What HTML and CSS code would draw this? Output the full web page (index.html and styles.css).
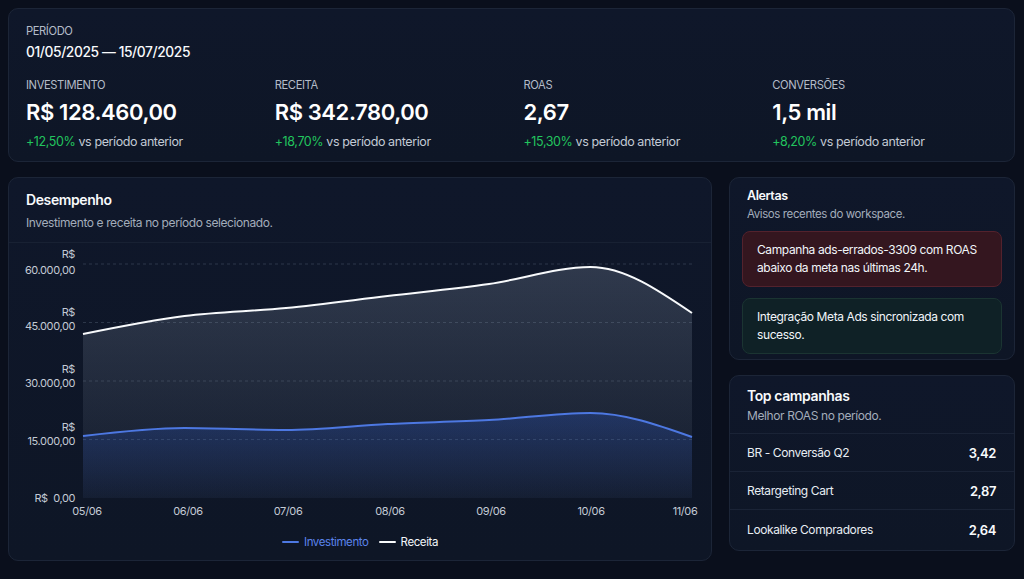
FILE: index.html
```html
<!DOCTYPE html>
<html lang="pt-BR">
<head>
<meta charset="utf-8">
<title>Dashboard</title>
<link rel="stylesheet" href="styles.css">
</head>
<body>
<div class="page">
  <section class="card summary">
    <div class="label">PERÍODO</div>
    <div class="period">01/05/2025 — 15/07/2025</div>
    <div class="metrics">
      <div class="metric">
        <div class="label">INVESTIMENTO</div>
        <div class="value">R$ 128.460,00</div>
        <div class="delta"><span class="up">+12,50%</span> vs período anterior</div>
      </div>
      <div class="metric">
        <div class="label">RECEITA</div>
        <div class="value">R$ 342.780,00</div>
        <div class="delta"><span class="up">+18,70%</span> vs período anterior</div>
      </div>
      <div class="metric">
        <div class="label">ROAS</div>
        <div class="value">2,67</div>
        <div class="delta"><span class="up">+15,30%</span> vs período anterior</div>
      </div>
      <div class="metric">
        <div class="label">CONVERSÕES</div>
        <div class="value">1,5 mil</div>
        <div class="delta"><span class="up">+8,20%</span> vs período anterior</div>
      </div>
    </div>
  </section>

  <div class="row">
    <section class="card perf">
      <header class="perf-head">
        <h2 class="title">Desempenho</h2>
        <p class="sub">Investimento e receita no período selecionado.</p>
      </header>
      <svg class="chart" viewBox="9 243 702 282" width="702" height="282">
        <defs>
          <linearGradient id="gRev" x1="0" y1="0" x2="0" y2="1">
            <stop offset="0" stop-color="#8391a6" stop-opacity="0.28"/>
            <stop offset="1" stop-color="#8391a6" stop-opacity="0.05"/>
          </linearGradient>
          <linearGradient id="gInv" x1="0" y1="0" x2="0" y2="1">
            <stop offset="0" stop-color="#2a56c4" stop-opacity="0.3"/>
            <stop offset="1" stop-color="#2a56c4" stop-opacity="0.04"/>
          </linearGradient>
        </defs>
        <g class="grid">
          <line x1="83" y1="264" x2="692" y2="264"/>
          <line x1="83" y1="322.5" x2="692" y2="322.5"/>
          <line x1="83" y1="381" x2="692" y2="381"/>
          <line x1="83" y1="439.5" x2="692" y2="439.5"/>
        </g>
        <path fill="url(#gRev)" d="M83,334 C116.83,327.16 150.67,320.33 184.5,316 C218.33,311.67 252.17,311.33 286,308 C319.83,304.67 353.67,300 387.5,296 C421.33,292 455.17,288.83 489,284 C522.83,279.17 556.67,267 590.5,267 C624.33,267 658.17,290 692,313 L692,498 L83,498 Z"/>
        <path fill="url(#gInv)" d="M83,436 C116.83,432 150.67,428 184.5,428 C218.33,428 252.17,430 286,430 C319.83,430 353.67,425.67 387.5,424 C421.33,422.33 455.17,421.83 489,420 C522.83,418.17 556.67,413 590.5,413 C624.33,413 658.17,425 692,437 L692,498 L83,498 Z"/>
        <path class="line-rev" d="M83,334 C116.83,327.16 150.67,320.33 184.5,316 C218.33,311.67 252.17,311.33 286,308 C319.83,304.67 353.67,300 387.5,296 C421.33,292 455.17,288.83 489,284 C522.83,279.17 556.67,267 590.5,267 C624.33,267 658.17,290 692,313"/>
        <path class="line-inv" d="M83,436 C116.83,432 150.67,428 184.5,428 C218.33,428 252.17,430 286,430 C319.83,430 353.67,425.67 387.5,424 C421.33,422.33 455.17,421.83 489,420 C522.83,418.17 556.67,413 590.5,413 C624.33,413 658.17,425 692,437"/>
        <g class="ytick">
          <text x="75" y="258">R$</text><text x="75" y="274">60.000,00</text>
          <text x="75" y="316">R$</text><text x="75" y="330">45.000,00</text>
          <text x="75" y="373">R$</text><text x="75" y="387">30.000,00</text>
          <text x="75" y="431">R$</text><text x="75" y="445">15.000,00</text>
          <text x="75" y="502">R$  0,00</text>
        </g>
        <g class="xtick">
          <text x="87" y="515">05/06</text>
          <text x="188" y="515">06/06</text>
          <text x="288" y="515">07/06</text>
          <text x="390" y="515">08/06</text>
          <text x="491" y="515">09/06</text>
          <text x="591" y="515">10/06</text>
          <text x="685" y="515">11/06</text>
        </g>
      </svg>
      <div class="legend">
        <span class="leg leg-inv"><i class="swatch"></i>Investimento</span>
        <span class="leg leg-rev"><i class="swatch"></i>Receita</span>
      </div>
    </section>

    <div class="side">
      <section class="card alerts">
        <div class="alerts-head">
          <h3 class="a-title">Alertas</h3>
          <p class="a-sub">Avisos recentes do workspace.</p>
        </div>
        <div class="alert-list">
          <div class="alert alert-bad">Campanha ads-errados-3309 com ROAS abaixo da meta nas últimas 24h.</div>
          <div class="alert alert-ok">Integração Meta Ads sincronizada com sucesso.</div>
        </div>
      </section>

      <section class="card topc">
        <div class="topc-head">
          <h3 class="title">Top campanhas</h3>
          <p class="sub">Melhor ROAS no período.</p>
        </div>
        <div class="trow"><span>BR - Conversão Q2</span><b>3,42</b></div>
        <div class="trow"><span>Retargeting Cart</span><b>2,87</b></div>
        <div class="trow"><span>Lookalike Compradores</span><b>2,64</b></div>
      </section>
    </div>
  </div>
</div>
</body>
</html>
```

FILE: styles.css
```css
* { box-sizing: border-box; }
html, body { margin: 0; padding: 0; }
body {
  background: #0a0f1c;
  font-family: Inter, "Noto Sans", "Liberation Sans", sans-serif;
  letter-spacing: -0.025em;
  color: #f1f5f9;
  width: 1024px;
  height: 579px;
  overflow: hidden;
}
.page { padding: 8px 9px 8px 8px; }

.card {
  background: linear-gradient(180deg, #0f172a 0%, #0e1626 100%);
  border: 1px solid #1c2537;
  border-radius: 10px;
}

/* summary */
.summary { height: 154px; padding: 14px 17px 0 17px; }
.label { font-size: 11.2px; line-height: 16px; color: #b4bcc8; }
.period { margin-top: 3px; font-size: 13.8px; line-height: 20px; color: #f8fafc; font-weight: 500; }
.metrics {
  margin-top: 15px;
  display: grid;
  grid-template-columns: repeat(4, 1fr);
  column-gap: 24px;
}
.value { margin-top: 5px; font-size: 22px; line-height: 28px; font-weight: 600; color: #ffffff; }
.delta { margin-top: 8px; font-size: 12.5px; line-height: 16px; color: #c3cad5; }
.up { color: #22c55e; }

/* row */
.row {
  margin-top: 15px;
  display: grid;
  grid-template-columns: 1fr 286px;
  column-gap: 17px;
  align-items: start;
}

.title { margin: 0; font-size: 14px; line-height: 20px; font-weight: 600; color: #f8fafc; }
.sub { margin: 0; font-size: 12px; line-height: 16px; color: #a3adbb; }

/* performance */
.perf { height: 384px; }
.perf-head { padding: 12px 17px 11px; border-bottom: 1px solid #182133; }
.perf-head .sub { margin-top: 5px; }
.chart { display: block; }
.grid line { stroke: #3a4558; stroke-dasharray: 3 3; stroke-width: 1; opacity: 0.7; }
.line-rev { fill: none; stroke: #f8fafc; stroke-width: 2; }
.line-inv { fill: none; stroke: #4d78e2; stroke-width: 2; }
.ytick text { font-size: 11px; fill: #c3cad5; text-anchor: end; white-space: pre; }
.xtick text { font-size: 11px; fill: #c3cad5; text-anchor: middle; }
.legend {
  margin-top: 9px;
  display: flex;
  justify-content: center;
  gap: 10px;
  font-size: 11.5px;
  line-height: 16px;
}
.leg { display: inline-flex; align-items: center; gap: 5px; }
.swatch { display: inline-block; width: 17px; height: 2px; border-radius: 1px; }
.leg-inv { color: #5b84ec; }
.leg-inv .swatch { background: #4d78e2; }
.leg-rev { color: #f1f5f9; }
.leg-rev .swatch { background: #f8fafc; }

/* side */
.side { display: flex; flex-direction: column; gap: 15px; }
.alerts { height: 183px; overflow: hidden; }
.alerts-head { padding: 10px 17px 0; }
.a-title { margin: 0; font-size: 12.5px; line-height: 16px; font-weight: 600; color: #f8fafc; }
.a-sub { margin: 3px 0 0; font-size: 11.5px; line-height: 15px; color: #a3adbb; }
.alert-list { padding: 9px 12px 0; display: flex; flex-direction: column; gap: 11px; }
.alert {
  border-radius: 8px;
  padding: 9px 14px;
  font-size: 12px;
  line-height: 18px;
  color: #f1f5f9;
  min-height: 56px;
}
.alert-bad { background: #34161f; border: 1px solid #53222d; }
.alert-ok { background: #0f2126; border: 1px solid #1b3432; }

.topc { height: 176px; overflow: hidden; }
.topc-head { padding: 10px 17px 9px; border-bottom: 1px solid #1a2336; }
.topc-head .sub { margin-top: 2px; }
.trow {
  display: flex;
  justify-content: space-between;
  align-items: center;
  padding: 11px 18px 10px 17px;
  font-size: 12px;
  line-height: 16px;
  color: #e8edf3;
  border-bottom: 1px solid #1a2336;
}
.trow:last-child { border-bottom: none; padding-top: 12px; }
.trow b { font-weight: 600; font-size: 13px; color: #f8fafc; }
```
